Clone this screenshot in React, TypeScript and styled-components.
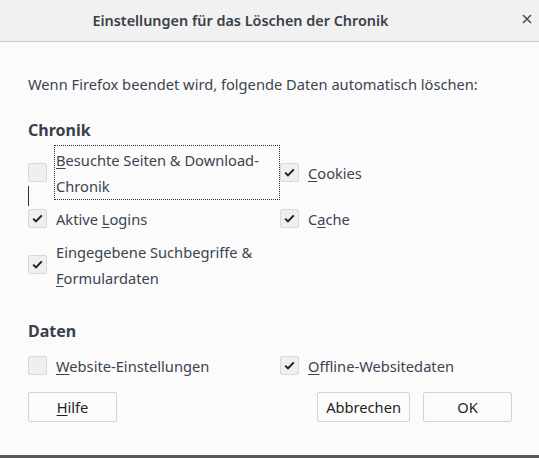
import styled, { createGlobalStyle } from 'styled-components';

const GlobalStyle = createGlobalStyle`
  html, body {
    margin: 0;
    padding: 0;
    background: #fbfbfb;
  }
  body {
    font-family: 'Noto Sans', 'Open Sans', sans-serif;
    color: #3c4350;
  }
`;

type Item = { label: React.ReactNode; checked: boolean; focused?: boolean };

const chronik: Item[] = [
  {
    label: (
      <>
        <u>B</u>esuchte Seiten &amp; Download-Chronik
      </>
    ),
    checked: false,
    focused: true,
  },
  {
    label: (
      <>
        <u>C</u>ookies
      </>
    ),
    checked: true,
  },
  {
    label: (
      <>
        Aktive <u>L</u>ogins
      </>
    ),
    checked: true,
  },
  {
    label: (
      <>
        C<u>a</u>che
      </>
    ),
    checked: true,
  },
  {
    label: (
      <>
        Eingegebene Suchbegriffe &amp; <u>F</u>ormulardaten
      </>
    ),
    checked: true,
  },
];

const daten: Item[] = [
  {
    label: (
      <>
        <u>W</u>ebsite-Einstellungen
      </>
    ),
    checked: false,
  },
  {
    label: (
      <>
        <u>O</u>ffline-Websitedaten
      </>
    ),
    checked: true,
  },
];

const CheckRow = ({ item }: { item: Item }) => (
  <Row>
    <Box>
      {item.checked && (
        <svg width="11" height="9" viewBox="0 0 11 9">
          <path d="M1.2 4.6 L4 7.4 L9.8 1.4" fill="none" stroke="#1c1f24" strokeWidth="2" />
        </svg>
      )}
    </Box>
    <Label focused={item.focused}>{item.label}</Label>
    {item.focused && <Caret />}
  </Row>
);

export default function App() {
  return (
    <>
      <GlobalStyle />
      <Window>
        <TitleBar>
          <Title>Einstellungen für das Löschen der Chronik</Title>
          <Close>
            <svg width="10" height="10" viewBox="0 0 10 10">
              <path d="M1 1 L9 9 M9 1 L1 9" stroke="#4a5260" strokeWidth="1.6" />
            </svg>
          </Close>
        </TitleBar>
        <Body>
          <Intro>Wenn Firefox beendet wird, folgende Daten automatisch löschen:</Intro>
          <Heading top={25}>Chronik</Heading>
          <Grid top={5}>
            {chronik.map((item, i) => (
              <CheckRow key={i} item={item} />
            ))}
          </Grid>
          <Heading top={29}>Daten</Heading>
          <Grid top={10}>
            {daten.map((item, i) => (
              <CheckRow key={i} item={item} />
            ))}
          </Grid>
          <Buttons>
            <Button>
              <u>H</u>ilfe
            </Button>
            <Spacer />
            <Button>Abbrechen</Button>
            <Button>OK</Button>
          </Buttons>
        </Body>
        <BottomEdge />
      </Window>
    </>
  );
}

const Window = styled.div`
  width: 539px;
  height: 458px;
  display: flex;
  flex-direction: column;
  background: #fbfbfb;
  overflow: hidden;
`;

const TitleBar = styled.div`
  height: 41px;
  flex: none;
  display: flex;
  align-items: center;
  justify-content: center;
  position: relative;
  background: #f1f1f1;
  border-bottom: 1px solid #c9c9c9;
`;

const Title = styled.div`
  font-size: 14.4px;
  font-weight: 600;
  color: #3a404b;
  margin-right: 58px;
`;

const Close = styled.div`
  position: absolute;
  right: 7px;
  top: 14px;
  display: flex;
`;

const Body = styled.div`
  flex: 1;
  padding: 31px 27px 0 28px;
  display: flex;
  flex-direction: column;
`;

const Intro = styled.div`
  font-size: 14.67px;
  line-height: 22px;
`;

const Heading = styled.div<{ top: number }>`
  font-size: 16px;
  font-weight: 700;
  line-height: 20px;
  margin-top: ${({ top }) => top}px;
  color: #3a404b;
`;

const Grid = styled.div<{ top: number }>`
  display: grid;
  grid-template-columns: 252px 1fr;
  row-gap: 4px;
  margin-top: ${({ top }) => top}px;
  align-items: center;
`;

const Row = styled.div`
  display: flex;
  align-items: center;
  position: relative;
`;

const Box = styled.div`
  width: 17px;
  height: 17px;
  flex: none;
  border: 1px solid #d9d9d9;
  border-radius: 2px;
  background: #efefef;
  display: flex;
  align-items: center;
  justify-content: center;
  margin-right: 7px;
`;

const Label = styled.div<{ focused?: boolean }>`
  font-size: 14.67px;
  line-height: 26px;
  padding: 1px 2px 0 1px;
  border: 1px dotted ${({ focused }) => (focused ? '#2a2f38' : 'transparent')};
  max-width: 222px;

  u {
    text-decoration-thickness: 1px;
    text-underline-offset: 2px;
  }
`;

const Caret = styled.div`
  position: absolute;
  left: 0;
  top: 41px;
  width: 1px;
  height: 20px;
  background: #2a2f38;
`;

const Buttons = styled.div`
  display: flex;
  gap: 13px;
  margin-top: 12px;
`;

const Spacer = styled.div`
  flex: 1;
`;

const Button = styled.div`
  box-sizing: border-box;
  min-width: 89px;
  height: 30px;
  padding: 0 8px;
  border: 1px solid #d3d3d3;
  border-radius: 2px;
  background: #fbfbfb;
  color: #1f1f1f;
  font-size: 14.67px;
  display: flex;
  align-items: center;
  justify-content: center;

  u {
    text-underline-offset: 2px;
  }
`;

const BottomEdge = styled.div`
  height: 3px;
  flex: none;
  background: #585858;
`;
